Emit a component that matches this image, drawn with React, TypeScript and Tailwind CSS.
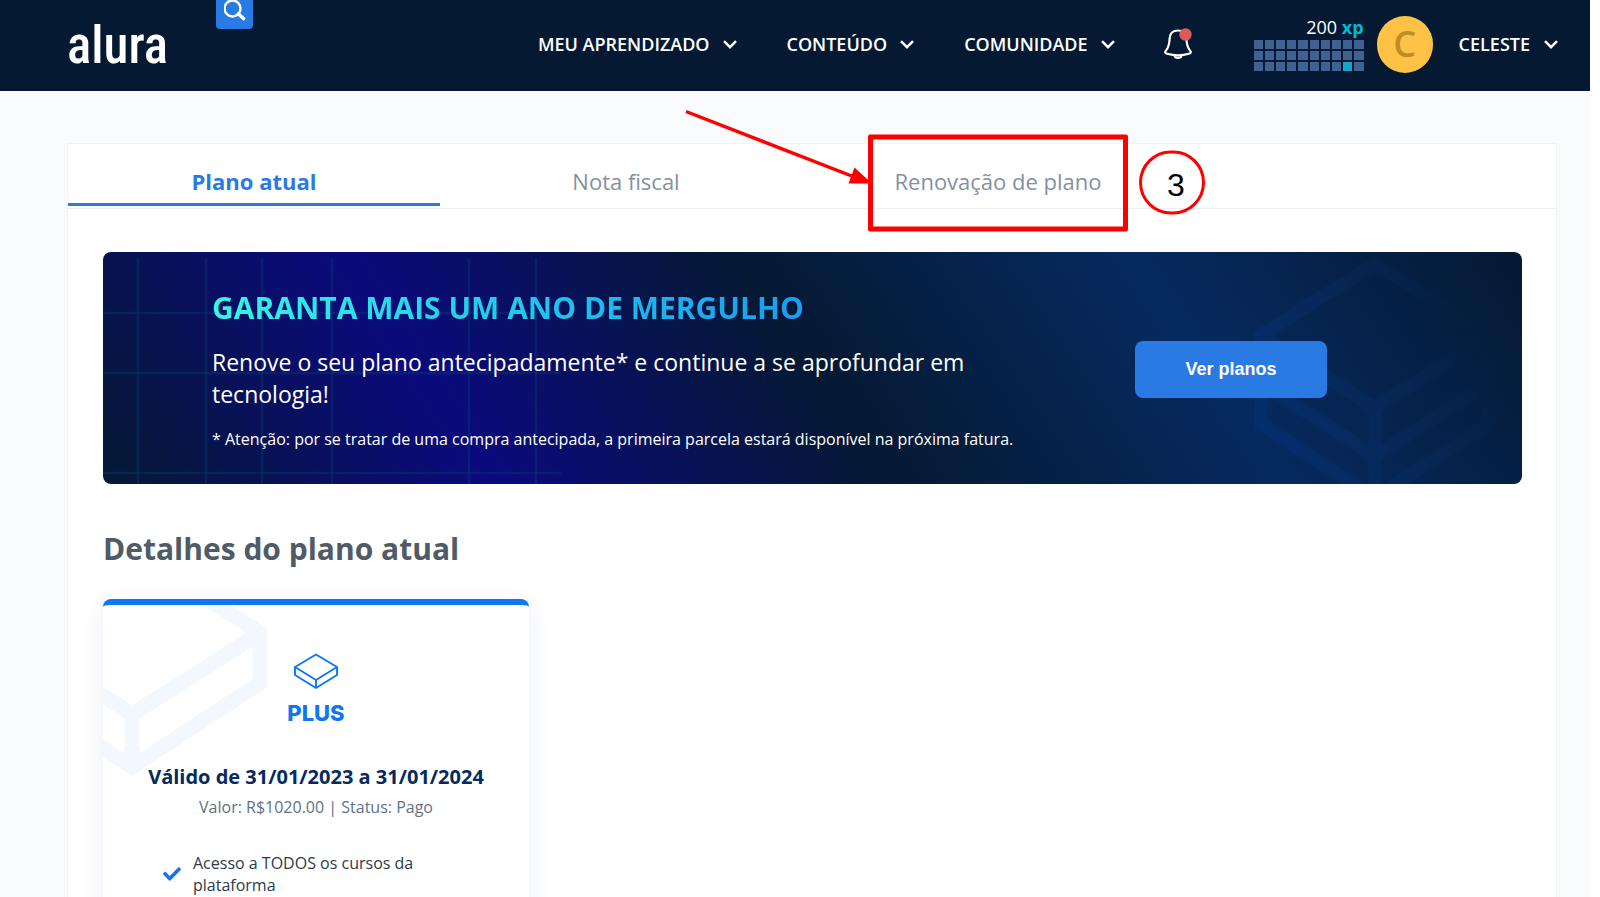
import React from "react";
import { FaCheck } from "react-icons/fa";

const navItems = ["MEU APRENDIZADO", "CONTEÚDO", "COMUNIDADE"];
const benefits = ["Acesso a TODOS os cursos da plataforma"];

function Chevron() {
  return (
    <svg viewBox="0 0 14 9" className="h-[9px] w-[14px]" fill="none" stroke="currentColor" strokeWidth="2.4">
      <path d="M1 1.2 7 7.2 13 1.2" />
    </svg>
  );
}

function Bell() {
  return (
    <svg viewBox="0 0 28 34" className="h-[34px] w-7" fill="none" stroke="#fff" strokeWidth="2.2">
      <path
        d="M14 3.500c-5 0-8 3-8.300 7.500-.3 6-.9 9.500-3.700 12.500-1.300 1.300-1 2.800 1 3.300 7 1.900 15 1.900 22 0 2-.5 2.300-2 1-3.300-2.800-3-3.400-6.500-3.700-12.500-.3-4.500-3.300-7.500-8.300-7.500z"
        strokeLinejoin="round"
      />
      <path d="M10.500 28.500c.6 3.200 6.400 3.200 7 0" />
      <circle cx="21.500" cy="7.500" r="6.200" fill="#dc5a5a" stroke="none" />
    </svg>
  );
}

function Header() {
  return (
    <header className="flex h-[91px] items-center bg-[#051933] pr-8 pb-[3px] pl-[67px] text-white">
      <a
        href="#"
        className="pt-1 font-['Liberation_Sans_Narrow','Roboto_Condensed','Open_Sans',sans-serif] text-[51px] leading-[54px] font-medium"
      >
        alura
      </a>
      <button
        type="button"
        aria-label="Buscar"
        className="ml-12 flex h-[29px] w-[37px] justify-center self-start rounded-b bg-[#2a7ae4]"
      >
        <svg viewBox="0 0 22 22" className="h-[22px] w-[22px]" fill="none" stroke="#fff" strokeWidth="2.4">
          <circle cx="8.500" cy="8.500" r="8" />
          <path d="m14.500 14 5 4.500" strokeWidth="3.600" strokeLinecap="round" />
        </svg>
      </button>

      <nav className="ml-auto flex items-center gap-[50px]">
        {navItems.map((item) => (
          <button key={item} type="button" className="flex items-center gap-[13px] text-[18px] font-semibold">
            {item}
            <Chevron />
          </button>
        ))}
      </nav>

      <button type="button" aria-label="Notificações" className="ml-[49px]">
        <Bell />
      </button>

      <div className="ml-[62px] flex flex-col items-end pb-[2px]">
        <p className="text-[18px] leading-[25px]">
          200 <span className="font-bold text-[#00b8d9]">xp</span>
        </p>
        <div className="grid w-[110px] grid-cols-10 gap-[2px]">
          {Array.from({ length: 30 }, (_, i) => (
            <span key={i} className={i === 28 ? "h-[9px] bg-[#18a3c9]" : "h-[9px] bg-[#3f6293]"} />
          ))}
        </div>
      </div>

      <button type="button" className="ml-[13px] flex items-center gap-[14px] text-[18px] font-semibold">
        <span className="mr-3 flex h-[57px] w-14 items-center justify-center rounded-full bg-[#ffc245] text-[36px] text-[#bf8c2c]">
          C
        </span>
        CELESTE
        <Chevron />
      </button>
    </header>
  );
}

// Arrow, frame and step number laid over the tab
function StepMarker() {
  return (
    <span className="pointer-events-none absolute top-[39px] left-1/2 h-[97px] w-[260px] -translate-x-1/2 -translate-y-1/2 rounded-xs border-[5px] border-[#ff0000]">
      <svg viewBox="0 0 190 80" className="absolute right-full bottom-10 h-20 w-[190px]">
        <path d="M3 5 170 70" stroke="#ff0000" strokeWidth="3.400" />
        <path d="M189 77 171.500 61 165.500 77z" fill="#ff0000" />
      </svg>
      <span className="absolute top-[11px] left-full ml-4 flex h-[64px] w-[66px] items-center justify-center rounded-full border-[3px] border-[#ff0000] pt-1 pl-2 font-['Liberation_Sans',sans-serif] text-[32px] text-black">
        3
      </span>
    </span>
  );
}

function Tabs() {
  return (
    <div role="tablist" className="grid grid-cols-4 border-b border-[#eceff1] pb-[2px] text-[22px]">
      <button type="button" role="tab" aria-selected="true" className="h-[62px] border-b-[3px] border-[#2a7ae4] pt-4 font-bold text-[#2a7ae4]">
        Plano atual
      </button>
      <button type="button" role="tab" aria-selected="false" className="h-[62px] border-b-[3px] border-transparent pt-4 text-[#83919e]">
        Nota fiscal
      </button>
      <button type="button" role="tab" aria-selected="false" className="relative h-[62px] border-b-[3px] border-transparent pt-4 text-[#83919e]">
        Renovação de plano
        <StepMarker />
      </button>
    </div>
  );
}

function Banner() {
  return (
    <section className="relative mt-[43px] mr-[34px] ml-[35px] flex items-center overflow-hidden rounded-lg bg-[linear-gradient(56deg,#051933_0%,#0b0a7d_25%,#051933_50%,#062a60_75%,#051933_100%)] pt-[36px] pb-[33px] pl-[109px] text-white">
      <svg viewBox="0 0 460 232" className="absolute top-0 left-0 h-[232px] w-[460px]" stroke="#0a4a78" strokeOpacity="0.3" strokeWidth="2.500">
        <path d="M35 6V232M103 6V232M159 6V232M229 6V232M366 6V232M433 6V232" />
        <path d="M0 61H458M0 121H458M0 221H458" />
      </svg>
      <svg viewBox="0 0 280 232" className="absolute top-0 right-0 h-[232px] w-[280px]" fill="none" stroke="url(#cubeFade)" strokeWidth="13">
        <defs>
          <linearGradient id="cubeFade" gradientUnits="userSpaceOnUse" x1="20" y1="200" x2="240" y2="100">
            <stop offset="0" stopColor="#043078" stopOpacity="0.6" />
            <stop offset="0.5" stopColor="#0a2f68" stopOpacity="0.35" />
            <stop offset="1" stopColor="#0a3060" stopOpacity="0.03" />
          </linearGradient>
        </defs>
        <path d="M133 12 19 83v89l114 74 114-74V83zM19 83l114 73 114-73M19 131l114 73 114-73M133 156v90" />
      </svg>

      <div className="relative w-[820px]">
        <h2 className="w-fit bg-linear-to-r from-[#37f5e4] to-[#1c9cf0] bg-clip-text text-[30px] leading-[40px] font-bold text-transparent">
          GARANTA MAIS UM ANO DE MERGULHO
        </h2>
        <p className="mt-[18px] max-w-[770px] text-[23px] leading-8">
          Renove o seu plano antecipadamente* e continue a se aprofundar em tecnologia!
        </p>
        <p className="mt-[17px] text-[16px] leading-6">
          * Atenção: por se tratar de uma compra antecipada, a primeira parcela estará disponível na próxima fatura.
        </p>
      </div>
      <button
        type="button"
        className="relative ml-[103px] h-[57px] w-48 rounded-lg bg-[#2a7ae4] font-['Liberation_Sans',sans-serif] text-[18px] font-bold"
      >
        Ver planos
      </button>
    </section>
  );
}

function PlanCard() {
  return (
    <article className="relative mt-[28px] flex w-[426px] flex-col items-center overflow-hidden rounded-t-lg border-t-[6px] border-[#0f76f5] bg-white pt-12 pb-20">
      <svg viewBox="0 0 170 180" className="absolute top-0 left-0 h-[180px] w-[170px]" fill="none" stroke="#f3f8fe" strokeWidth="15">
        <path d="M29-55 157 28v50L29 162-99 78V28zM-99 28 29 109 157 28M29 109v53" />
      </svg>
      <svg viewBox="0 0 44 36" className="relative h-9 w-11" fill="none" stroke="#0f76f5" strokeWidth="1.900" strokeLinejoin="round">
        <path d="M22 1.500 43 14v8L22 35 1 22v-8zM1 14l21 13 21-13M22 27v8" />
      </svg>
      <h3 className="relative mt-[10px] font-['Inter',sans-serif] text-[22px] leading-7 font-extrabold text-[#0f76f5]">PLUS</h3>
      <p className="relative mt-[37px] text-[20px] leading-[26px] font-bold text-[#052a5e]">
        Válido de 31/01/2023 a 31/01/2024
      </p>
      <p className="relative mt-[6px] text-[16px] leading-[22px] text-[#5d7289]">Valor: R$1020.00 | Status: Pago</p>
      <ul className="mt-[34px] w-[306px] text-[16px] leading-[22px] text-[#2d3a4a]">
        {benefits.map((benefit) => (
          <li key={benefit} className="flex items-center gap-3 pr-12">
            <FaCheck className="h-[18px] w-[18px] shrink-0 text-[#0f76f5]" />
            {benefit}
          </li>
        ))}
      </ul>
    </article>
  );
}

export default function App() {
  return (
    <div className="h-screen overflow-hidden bg-white pr-[10px] font-['Open_Sans',sans-serif]">
      <Header />
      <div className="bg-[#fafbfd] pt-[52px] pr-[33px] pl-[67px]">
        <main className="border border-[#f1f3f6] bg-white pb-20">
          <Tabs />
          <Banner />
          <section className="mt-[43px] mr-[34px] ml-[35px]">
            <h2 className="text-[30px] leading-[44px] font-bold text-[#4f5b66]">Detalhes do plano atual</h2>
            <div className="w-fit [&>article]:shadow-[0_4px_24px_rgba(15,70,150,0.08)]">
              <PlanCard />
            </div>
          </section>
        </main>
      </div>
    </div>
  );
}
